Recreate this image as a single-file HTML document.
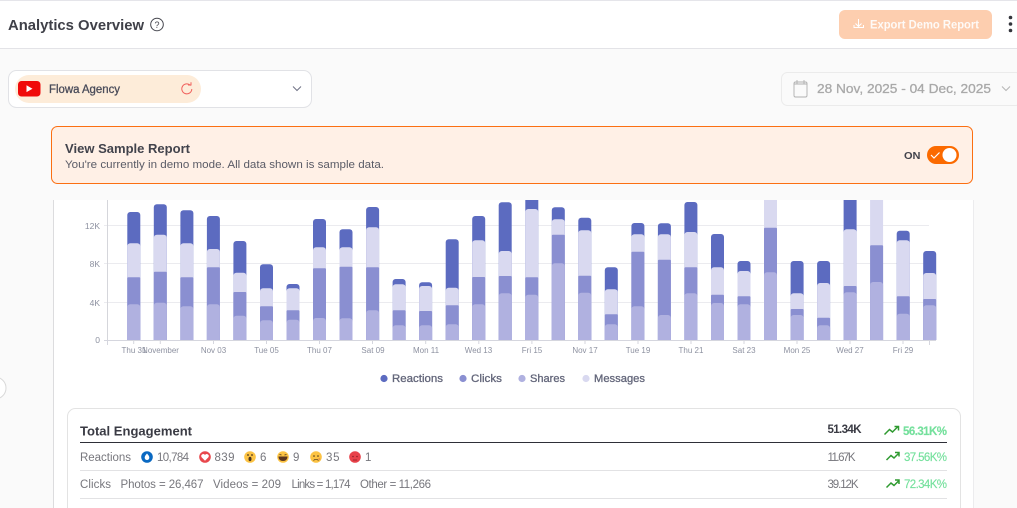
<!DOCTYPE html>
<html><head><meta charset="utf-8"><style>
html,body{margin:0;padding:0;background:#fafafa;width:1017px;height:508px;overflow:hidden}
svg{display:block;font-family:"Liberation Sans",sans-serif}
.b rect{width:13px;height:200px;rx:3px;ry:3px}
.b rect.c{rx:1px;ry:1px}
.r{fill:#5c6bc0}.m{fill:#d9d9f0}.c{fill:#8a8fd1}.s{fill:#b0b1e0}
.t{font-size:8px;fill:#8d91a0;text-anchor:middle}
.y{font-size:8.5px;fill:#8d91a0;text-anchor:end}
.l{font-size:11px;fill:#63667a;stroke:#63667a;stroke-width:.3px}
.g{font-size:11.5px;fill:#77777d}
.p{font-size:11.5px;fill:#74e09c;stroke:#74e09c;stroke-width:.15px}
.ar{fill:none;stroke:#2f9a30;stroke-width:1.5}
</style></head><body>
<svg width="1017" height="508" viewBox="0 0 1017 508" xmlns="http://www.w3.org/2000/svg">
<defs><clipPath id="cp"><rect x="100" y="200" width="860" height="140"/></clipPath></defs>
<rect width="1017" height="508" fill="#fafafa"/>
<!-- header -->
<rect width="1017" height="48" fill="#fff"/>
<rect width="1017" height="1" fill="#e5e5ea"/>
<rect y="48" width="1017" height="1" fill="#e3e3e7"/>
<text x="8" y="30" font-size="14.500" font-weight="700" fill="#3f4048" textLength="136" lengthAdjust="spacingAndGlyphs">Analytics Overview</text>
<circle cx="157" cy="24.500" r="6.300" fill="none" stroke="#45464e" stroke-width="1"/>
<text x="157" y="28" font-size="9" fill="#45464e" text-anchor="middle">?</text>
<rect x="839" y="10" width="153" height="29" rx="6" fill="#fdceaf"/>
<path d="M858 19.500v7.500m-3-3l3 3 3-3M853.500 25.500v2.500h9.500v-2.500" transform="translate(.5 -.5)" fill="none" stroke="#fff" stroke-width="1"/>
<text x="870" y="28.500" font-size="11.500" font-weight="700" fill="#fff" opacity=".9" textLength="109" lengthAdjust="spacingAndGlyphs">Export Demo Report</text>
<circle cx="1010.500" cy="17.500" r="1.800" fill="#34353c"/><circle cx="1010.500" cy="24" r="1.800" fill="#34353c"/><circle cx="1010.500" cy="30.500" r="1.800" fill="#34353c"/>
<!-- selector -->
<rect x="8.500" y="70.500" width="303" height="37" rx="8" fill="#fff" stroke="#e1e2e6"/>
<rect x="15" y="75" width="186" height="28" rx="14" fill="#fdecd9"/>
<rect x="18" y="81" width="22.500" height="15.500" rx="3.500" fill="#f00a0a"/>
<path d="M26.500 85.300l6 3.400-6 3.400z" fill="#fff"/>
<text x="49" y="93" font-size="11.500" fill="#4a4c5a" stroke="#4a4c5a" stroke-width=".3" textLength="71" lengthAdjust="spacingAndGlyphs">Flowa Agency</text>
<path d="M190.500 85.500a5 5 0 1 0 1.300 3.500M188 85h3v-2.800" fill="none" stroke="#f0605c" stroke-width="1"/>
<path d="M293 86.500l4 4 4-4" fill="none" stroke="#6f7285" stroke-width="1"/>
<!-- date -->
<rect x="781.500" y="72.500" width="240" height="33" rx="6" fill="#fafafa" stroke="#ebebeb"/>
<path d="M793.500 83.500h14M795.500 81.500h10a1.500 1.500 0 0 1 1.500 1.500v12a1.500 1.500 0 0 1-1.500 1.500h-10a1.500 1.500 0 0 1-1.500-1.500v-12a1.500 1.500 0 0 1 1.500-1.500zM797 79.500v4M804 79.500v4" transform="translate(0 .5)" fill="none" stroke="#b0b0b0" stroke-width=".9"/>
<text x="817" y="93" font-size="13" fill="#a9a9a9" stroke="#a9a9a9" stroke-width=".3" textLength="174" lengthAdjust="spacingAndGlyphs">28 Nov, 2025 - 04 Dec, 2025</text>
<path d="M1002 86.500l4 4 4-4" fill="none" stroke="#b5b5b5" stroke-width="1"/>
<!-- banner -->
<rect x="51.500" y="126.500" width="921" height="57" rx="6" fill="#fff0e6" stroke="#fb6f12"/>
<text x="65" y="153" font-size="13" font-weight="700" fill="#42434c" textLength="125" lengthAdjust="spacingAndGlyphs">View Sample Report</text>
<text x="65" y="168" font-size="11" fill="#5a5b66" textLength="319" lengthAdjust="spacingAndGlyphs">You're currently in demo mode. All data shown is sample data.</text>
<text x="904" y="159" font-size="10.500" font-weight="700" fill="#42434c" textLength="16.500" lengthAdjust="spacingAndGlyphs">ON</text>
<rect x="927" y="146" width="32" height="18" rx="9" fill="#fb6a00"/>
<circle cx="949.500" cy="155" r="7" fill="#fff"/>
<path d="M931 155l3 3 5.500-5.500" fill="none" stroke="#fff" stroke-width="1.200"/>
<!-- card -->
<rect x="53" y="200" width="920" height="308" fill="#fff"/>
<rect x="53" y="200" width="1" height="308" fill="#dcdcde"/>
<rect x="973" y="200" width="1" height="308" fill="#ececee"/>
<!-- left handle -->
<circle cx="-5" cy="388" r="11" fill="#fff" stroke="#d9d9d9"/>
<!-- grid -->
<g fill="#ebebef">
<rect x="104" y="225" width="825" height="1"/><rect x="104" y="263" width="825" height="1"/><rect x="104" y="302" width="825" height="1"/>
</g>
<rect x="107" y="200" width="1" height="144" fill="#d5d6db"/>
<!-- bars -->
<g class="b" clip-path="url(#cp)">
<rect class="r" x="127.300" y="212"/><rect class="m" x="127.300" y="243.300"/><rect class="c" x="127.300" y="277.300"/><rect class="s" x="127.300" y="304.300"/>
<rect class="r" x="153.800" y="204.300"/><rect class="m" x="153.800" y="234.700"/><rect class="c" x="153.800" y="271.700"/><rect class="s" x="153.800" y="302.700"/>
<rect class="r" x="180.400" y="210.300"/><rect class="m" x="180.400" y="243.300"/><rect class="c" x="180.400" y="277.300"/><rect class="s" x="180.400" y="306.300"/>
<rect class="r" x="206.900" y="216"/><rect class="m" x="206.900" y="249"/><rect class="c" x="206.900" y="267.300"/><rect class="s" x="206.900" y="304.300"/>
<rect class="r" x="233.400" y="241"/><rect class="m" x="233.400" y="272.700"/><rect class="c" x="233.400" y="292"/><rect class="s" x="233.400" y="315.700"/>
<rect class="r" x="260" y="264.300"/><rect class="m" x="260" y="288.300"/><rect class="c" x="260" y="306.300"/><rect class="s" x="260" y="320.300"/>
<rect class="r" x="286.500" y="284"/><rect class="m" x="286.500" y="288.300"/><rect class="c" x="286.500" y="310.300"/><rect class="s" x="286.500" y="319.700"/>
<rect class="r" x="313" y="219"/><rect class="m" x="313" y="247.300"/><rect class="c" x="313" y="268.300"/><rect class="s" x="313" y="318"/>
<rect class="r" x="339.500" y="229.300"/><rect class="m" x="339.500" y="247.300"/><rect class="c" x="339.500" y="266.700"/><rect class="s" x="339.500" y="318.300"/>
<rect class="r" x="366.100" y="207"/><rect class="m" x="366.100" y="227.300"/><rect class="c" x="366.100" y="267.300"/><rect class="s" x="366.100" y="310.300"/>
<rect class="r" x="392.600" y="279"/><rect class="m" x="392.600" y="284.300"/><rect class="c" x="392.600" y="310.300"/><rect class="s" x="392.600" y="325.300"/>
<rect class="r" x="419.100" y="282.300"/><rect class="m" x="419.100" y="286"/><rect class="c" x="419.100" y="311"/><rect class="s" x="419.100" y="325.300"/>
<rect class="r" x="445.700" y="239.300"/><rect class="m" x="445.700" y="287.700"/><rect class="c" x="445.700" y="305.300"/><rect class="s" x="445.700" y="324.300"/>
<rect class="r" x="472.200" y="216"/><rect class="m" x="472.200" y="240.300"/><rect class="c" x="472.200" y="277"/><rect class="s" x="472.200" y="304.300"/>
<rect class="r" x="498.700" y="202.300"/><rect class="m" x="498.700" y="251"/><rect class="c" x="498.700" y="276"/><rect class="s" x="498.700" y="293.300"/>
<rect class="r" x="525.300" y="190"/><rect class="m" x="525.300" y="209"/><rect class="c" x="525.300" y="277.300"/><rect class="s" x="525.300" y="294.700"/>
<rect class="r" x="551.800" y="207.300"/><rect class="m" x="551.800" y="219.300"/><rect class="c" x="551.800" y="234.700"/><rect class="s" x="551.800" y="263.300"/>
<rect class="r" x="578.300" y="217.700"/><rect class="m" x="578.300" y="230.300"/><rect class="c" x="578.300" y="275.700"/><rect class="s" x="578.300" y="292.700"/>
<rect class="r" x="604.800" y="267.300"/><rect class="m" x="604.800" y="289.300"/><rect class="c" x="604.800" y="314.300"/><rect class="s" x="604.800" y="324.300"/>
<rect class="r" x="631.400" y="223"/><rect class="m" x="631.400" y="234.300"/><rect class="c" x="631.400" y="251.700"/><rect class="s" x="631.400" y="306.300"/>
<rect class="r" x="657.900" y="223.300"/><rect class="m" x="657.900" y="234.300"/><rect class="c" x="657.900" y="259.700"/><rect class="s" x="657.900" y="315"/>
<rect class="r" x="684.400" y="202"/><rect class="m" x="684.400" y="232"/><rect class="c" x="684.400" y="267.300"/><rect class="s" x="684.400" y="293.300"/>
<rect class="r" x="711" y="234"/><rect class="m" x="711" y="267.300"/><rect class="c" x="711" y="294.700"/><rect class="s" x="711" y="303"/>
<rect class="r" x="737.500" y="261"/><rect class="m" x="737.500" y="271"/><rect class="c" x="737.500" y="296.300"/><rect class="s" x="737.500" y="304.300"/>
<rect class="m" x="764" y="190"/><rect class="c" x="764" y="227.700"/><rect class="s" x="764" y="272.300"/>
<rect class="r" x="790.600" y="261"/><rect class="m" x="790.600" y="293.300"/><rect class="c" x="790.600" y="309"/><rect class="s" x="790.600" y="315"/>
<rect class="r" x="817.100" y="261"/><rect class="m" x="817.100" y="283"/><rect class="c" x="817.100" y="317.700"/><rect class="s" x="817.100" y="325.300"/>
<rect class="r" x="843.600" y="190"/><rect class="m" x="843.600" y="229.300"/><rect class="c" x="843.600" y="286"/><rect class="s" x="843.600" y="292.300"/>
<rect class="m" x="870.100" y="190"/><rect class="c" x="870.100" y="245.300"/><rect class="s" x="870.100" y="282"/>
<rect class="r" x="896.700" y="230.700"/><rect class="m" x="896.700" y="240.300"/><rect class="c" x="896.700" y="296.300"/><rect class="s" x="896.700" y="313.700"/>
<rect class="r" x="923.200" y="251"/><rect class="m" x="923.200" y="273"/><rect class="c" x="923.200" y="299"/><rect class="s" x="923.200" y="305.300"/>
</g>
<!-- axis -->
<rect x="104" y="340" width="832" height="1" fill="#d5d6de"/>
<path d="M107.500 340v5M133.700 340v4M160.300 340v4M213.500 340v4M266.500 340v4M319.500 340v4M372.500 340v4M425.700 340v4M478.800 340v4M531.900 340v4M585 340v4M638 340v4M691 340v4M744 340v4M797 340v4M850 340v4M903 340v4M929.500 340v5" stroke="#d5d6de" stroke-width="1"/>
<text class="y" x="100" y="229">12K</text><text class="y" x="100" y="267">8K</text><text class="y" x="100" y="306">4K</text><text class="y" x="100" y="343">0</text>
<text class="t" x="134" y="353">Thu 31</text><text class="t" x="160.500" y="353">November</text><text class="t" x="213.500" y="353">Nov 03</text><text class="t" x="266.500" y="353">Tue 05</text><text class="t" x="319.500" y="353">Thu 07</text><text class="t" x="373" y="353">Sat 09</text><text class="t" x="426" y="353">Mon 11</text><text class="t" x="478.500" y="353">Wed 13</text><text class="t" x="532" y="353">Fri 15</text><text class="t" x="585" y="353">Nov 17</text><text class="t" x="638" y="353">Tue 19</text><text class="t" x="691" y="353">Thu 21</text><text class="t" x="744" y="353">Sat 23</text><text class="t" x="797" y="353">Mon 25</text><text class="t" x="850" y="353">Wed 27</text><text class="t" x="903" y="353">Fri 29</text>
<!-- legend -->
<circle cx="384" cy="378.500" r="3.600" class="r"/><text class="l" x="392" y="382" textLength="51" lengthAdjust="spacingAndGlyphs">Reactions</text>
<circle cx="463" cy="378.500" r="3.600" class="c"/><text class="l" x="471" y="382" textLength="31" lengthAdjust="spacingAndGlyphs">Clicks</text>
<circle cx="522" cy="378.500" r="3.600" class="s"/><text class="l" x="530" y="382" textLength="35" lengthAdjust="spacingAndGlyphs">Shares</text>
<circle cx="586" cy="378.500" r="3.600" class="m"/><text class="l" x="594" y="382" textLength="51" lengthAdjust="spacingAndGlyphs">Messages</text>
<!-- table -->
<rect x="67.500" y="408.500" width="893" height="120" rx="8" fill="#fff" stroke="#e3e3e3"/>
<text x="80" y="435.500" font-size="13" font-weight="700" fill="#3a3b44" textLength="112" lengthAdjust="spacingAndGlyphs">Total Engagement</text>
<rect x="80" y="442" width="867" height="1" fill="#2e2f38"/>
<rect x="80" y="470" width="867" height="1" fill="#e2e2e4"/>
<rect x="80" y="498" width="867" height="1" fill="#e2e2e4"/>
<text class="g" x="80" y="461" textLength="51" lengthAdjust="spacing">Reactions</text>
<circle cx="147" cy="457" r="5.800" fill="#0a69c2"/><path d="M147 453.500c1.800 2 2.300 3 2.300 4.200a2.300 2.300 0 0 1-4.600 0c0-1.200.5-2.200 2.300-4.200z" fill="#fff"/>
<text class="g" x="157" y="461" textLength="32" lengthAdjust="spacing">10,784</text>
<circle cx="205" cy="457" r="5.800" fill="#e8474c"/><path d="M205 460.800l-3.400-3.600a2 2 0 0 1 3.400-2.200 2 2 0 0 1 3.400 2.200z" fill="#fff"/>
<text class="g" x="214.500" y="461" textLength="20" lengthAdjust="spacing">839</text>
<circle cx="250" cy="457" r="5.800" fill="#fcc344"/><circle cx="248" cy="455" r=".9" fill="#4a3520"/><circle cx="252" cy="455" r=".9" fill="#4a3520"/><ellipse cx="250" cy="459" rx="1.500" ry="2.200" fill="#4a3520"/>
<text class="g" x="260" y="461">6</text>
<circle cx="283" cy="457" r="5.800" fill="#fcc344"/><path d="M278.500 456.500h9c0 3-2 4.500-4.500 4.500s-4.500-1.500-4.500-4.500z" fill="#5a3520"/><path d="M279.500 454.500l2 .5M286.500 454.500l-2 .5" stroke="#4a3520" stroke-width=".9"/>
<text class="g" x="293" y="461">9</text>
<circle cx="316" cy="457" r="5.800" fill="#fcc344"/><circle cx="314" cy="456" r=".8" fill="#4a3520"/><circle cx="318" cy="456" r=".8" fill="#4a3520"/><path d="M313.500 460.500c1.500-1.500 3.500-1.500 5 0" fill="none" stroke="#4a3520" stroke-width=".8"/><circle cx="319.300" cy="459" r="1" fill="#e8944a"/>
<text class="g" x="326" y="461" textLength="13.500" lengthAdjust="spacing">35</text>
<circle cx="355" cy="457" r="5.800" fill="#e8414a"/><circle cx="353" cy="456.500" r=".8" fill="#8c2028"/><circle cx="357" cy="456.500" r=".8" fill="#8c2028"/><path d="M352.900 460h4.200" stroke="#8c2028" stroke-width=".8"/>
<text class="g" x="365" y="461">1</text>
<text class="g" x="80" y="488" textLength="31" lengthAdjust="spacing">Clicks</text>
<text class="g" x="120.500" y="488" textLength="83" lengthAdjust="spacing">Photos = 26,467</text>
<text class="g" x="213" y="488" textLength="68" lengthAdjust="spacing">Videos = 209</text>
<text class="g" x="291.500" y="488" textLength="59" lengthAdjust="spacing">Links = 1,174</text>
<text class="g" x="360" y="488" textLength="71" lengthAdjust="spacing">Other = 11,266</text>
<!-- right values -->
<text x="827.500" y="433" font-size="11.500" font-weight="700" fill="#3a3b44" textLength="34" lengthAdjust="spacing">51.34K</text>
<path class="ar" d="M884.500 434.500l5-5 3 2.500 5.500-5.500M894.500 426.500h4v4"/>
<text class="p" x="903" y="435" font-weight="700" textLength="44" lengthAdjust="spacing">56.31K%</text>
<text class="g" x="827.500" y="461" textLength="28" lengthAdjust="spacing">11.67K</text>
<path class="ar" d="M886.500 460l4.500-4.500 3 2.500 5-5M895 452.500h4v4"/>
<text class="p" x="904" y="461" textLength="43" lengthAdjust="spacing">37.56K%</text>
<text class="g" x="827.500" y="488" textLength="31" lengthAdjust="spacing">39.12K</text>
<path class="ar" d="M886.500 487.500l4.500-4.500 3 2.500 5-5M895 480h4v4"/>
<text class="p" x="904" y="488" textLength="43" lengthAdjust="spacing">72.34K%</text>
</svg>
</body></html>
